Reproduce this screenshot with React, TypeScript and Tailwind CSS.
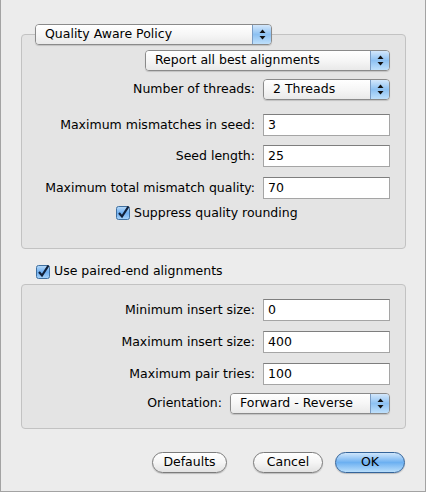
import React from 'react'

const font = { fontFamily: '"DejaVu Sans", "Liberation Sans", sans-serif' }

const Arrows = () => (
  <svg width="7" height="11" viewBox="0 0 7 11">
    <path d="M3.5 0.5 L6.5 4 L0.5 4 Z" fill="#111" />
    <path d="M3.5 10.5 L6.5 7 L0.5 7 Z" fill="#111" />
  </svg>
)

const Popup = ({ label, width }: { label: string; width: string }) => (
  <div
    className={`${width} h-[21px] flex items-stretch rounded-[4px] border border-[#8a8a8a] overflow-hidden shadow-[0_1px_1px_rgba(0,0,0,0.15)]`}
  >
    <div className="flex-1 flex items-center pl-[9px] bg-gradient-to-b from-white via-[#f6f6f6] to-[#e9e9e9] text-[12.5px] text-black">
      {label}
    </div>
    <div className="w-[19px] flex items-center justify-center border-l border-[#7a9cc4] bg-gradient-to-b from-[#d3e7fb] via-[#8dc1f2] to-[#bfe0fb]">
      <Arrows />
    </div>
  </div>
)

const Field = ({ value }: { value: string }) => (
  <div className="w-[127px] h-[22px] flex items-center pl-[4px] bg-white border border-[#a5a5a5] border-t-[#7e7e7e] text-[12.5px] text-black">
    {value}
  </div>
)

const Check = () => (
  <svg width="14" height="14" viewBox="0 0 14 14" className="shrink-0">
    <defs>
      <linearGradient id="cb" x1="0" y1="0" x2="0" y2="1">
        <stop offset="0" stopColor="#b9dbf9" />
        <stop offset="0.5" stopColor="#6eaef0" />
        <stop offset="1" stopColor="#a9d4fa" />
      </linearGradient>
    </defs>
    <rect x="0.5" y="0.5" width="13" height="13" rx="2" fill="url(#cb)" stroke="#3f6f9f" />
    <path d="M3 7 L6 10.5 L12.5 0.5" fill="none" stroke="#10203a" strokeWidth="2.2" />
  </svg>
)

const Row = ({ label, children, labelW = 'w-[233px]', mt }: { label: string; children: React.ReactNode; labelW?: string; mt: string }) => (
  <div className={`flex items-center ${mt}`}>
    <div className={`${labelW} text-right text-[12.5px] text-black`}>{label}</div>
    <div className="ml-[8px]">{children}</div>
  </div>
)

const Button = ({ label, width, primary }: { label: string; width: string; primary?: boolean }) => (
  <div
    className={`${width} h-[21px] rounded-full flex items-center justify-center text-[12.5px] text-black border ${
      primary
        ? 'border-[#34649a] bg-gradient-to-b from-[#cfe6fb] via-[#6cb0f1] to-[#b8defb]'
        : 'border-[#7c7c7c] bg-gradient-to-b from-white via-[#f5f5f5] to-[#e2e2e2]'
    } shadow-[0_1px_1px_rgba(0,0,0,0.2)]`}
  >
    {label}
  </div>
)

export default function App() {
  return (
    <div
      style={font}
      className="w-[426px] h-[492px] bg-[#ececec] border-x border-b border-[#a3a3a3] pt-[24px] flex flex-col"
    >
      <div className="pl-[34px] relative z-10">
        <Popup label="Quality Aware Policy" width="w-[237px]" />
      </div>
      <div className="ml-[20px] w-[385px] h-[215px] -mt-[11px] rounded-[4px] border border-[#c2c2c2] bg-[#e4e4e4] pt-[15px]">
        <div className="flex justify-end pr-[15px]">
          <Popup label="Report all best alignments" width="w-[245px]" />
        </div>
        <Row label="Number of threads:" mt="mt-[8px]">
          <Popup label="2 Threads" width="w-[127px]" />
        </Row>
        <Row label="Maximum mismatches in seed:" mt="mt-[14px]">
          <Field value="3" />
        </Row>
        <Row label="Seed length:" mt="mt-[9px]">
          <Field value="25" />
        </Row>
        <Row label="Maximum total mismatch quality:" mt="mt-[10px]">
          <Field value="70" />
        </Row>
        <div className="flex items-center pl-[94px] mt-[4px] h-[20px] gap-[4px] text-[12.5px] text-black">
          <Check />
          <span>Suppress quality rounding</span>
        </div>
      </div>
      <div className="flex items-center pl-[35px] mt-[14px] h-[17px] gap-[4px] text-[12.5px] text-black">
        <Check />
        <span>Use paired-end alignments</span>
      </div>
      <div className="ml-[20px] w-[385px] h-[145px] mt-[4px] rounded-[4px] border border-[#c2c2c2] bg-[#e4e4e4] pt-[14px]">
        <Row label="Minimum insert size:" mt="mt-0">
          <Field value="0" />
        </Row>
        <Row label="Maximum insert size:" mt="mt-[10px]">
          <Field value="400" />
        </Row>
        <Row label="Maximum pair tries:" mt="mt-[10px]">
          <Field value="100" />
        </Row>
        <Row label="Orientation:" labelW="w-[200px]" mt="mt-[8px]">
          <Popup label="Forward - Reverse" width="w-[160px]" />
        </Row>
      </div>
      <div className="flex justify-end items-center gap-[12px] pr-[20px] mt-[23px]">
        <div className="mr-[14px]">
          <Button label="Defaults" width="w-[75px]" />
        </div>
        <Button label="Cancel" width="w-[70px]" />
        <Button label="OK" width="w-[70px]" primary />
      </div>
    </div>
  )
}
